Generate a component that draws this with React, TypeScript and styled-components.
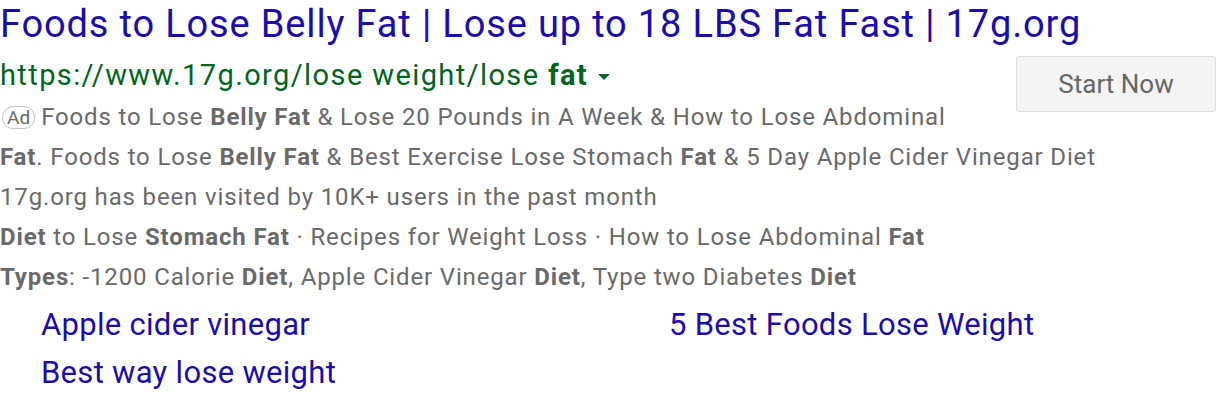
import React from "react";
import styled, { createGlobalStyle } from "styled-components";

const Global = createGlobalStyle`
  html, body { margin: 0; padding: 0; background: #fff; }
  body { font-family: Roboto, "Liberation Sans", Arial, sans-serif; }
`;

const Ad = styled.div`
  width: 1216px;
  box-sizing: border-box;
`;

const Title = styled.a`
  display: block;
  color: #1a0dab;
  font-size: 38px;
  letter-spacing: 0.85px;
  line-height: 48px;
  margin-bottom: 5px;
  text-decoration: none;
  white-space: nowrap;
`;

const Body = styled.div`
  display: block;
`;

const CtaButton = styled.button`
  float: right;
  margin: 3px 0 10px 20px;
  width: 200px;
  height: 56px;
  background: #f4f4f4;
  border: 1px solid #dcdcdc;
  border-radius: 3px;
  color: #666;
  font-family: Roboto, "Liberation Sans", Arial, sans-serif;
  font-size: 26px;
  padding: 0;
`;

const UrlLine = styled.div`
  color: #006621;
  font-size: 29px;
  letter-spacing: 1.4px;
  line-height: 44px;
  display: flex;
  align-items: center;
  white-space: pre;
  b { font-weight: 700; }
`;

const Caret = styled.span`
  display: inline-block;
  width: 0;
  height: 0;
  margin-left: 10px;
  margin-top: 3px;
  border-left: 6px solid transparent;
  border-right: 6px solid transparent;
  border-top: 6px solid #006621;
`;

const Desc = styled.div`
  color: #6a6a6a;
  font-size: 24px;
  letter-spacing: 0.85px;
  line-height: 40px;
  b { font-weight: 700; }
`;

const Badge = styled.span`
  display: inline-block;
  font-size: 19px;
  letter-spacing: 0;
  line-height: 21px;
  padding: 0 4px;
  border: 1px solid #c4c4c4;
  border-radius: 11px;
  margin: 0 6px 0 2px;
  color: #6a6a6a;
  vertical-align: 1px;
`;

const Sitelinks = styled.div`
  clear: both;
  display: grid;
  grid-template-columns: 628px 1fr;
  padding-left: 41px;
  padding-top: 4px;
`;

const Sitelink = styled.a`
  color: #1a0dab;
  font-size: 31px;
  letter-spacing: 0.3px;
  line-height: 48px;
  text-decoration: none;
`;

export default function App() {
  return (
    <>
      <Global />
      <Ad>
        <Title href="#">Foods to Lose Belly Fat | Lose up to 18 LBS Fat Fast | 17g.org</Title>
        <Body>
          <CtaButton>Start Now</CtaButton>
          <UrlLine>
            {"https://www.17g.org/lose weight/lose "}<b>fat</b>
            <Caret />
          </UrlLine>
          <Desc>
            <Badge>Ad</Badge>Foods to Lose <b>Belly Fat</b> &amp; Lose 20 Pounds in A Week &amp; How to Lose Abdominal
            <br />
            <b>Fat</b>. Foods to Lose <b>Belly Fat</b> &amp; Best Exercise Lose Stomach <b>Fat</b> &amp; 5 Day Apple Cider Vinegar Diet
          </Desc>
          <Desc>17g.org has been visited by 10K+ users in the past month</Desc>
          <Desc>
            <b>Diet</b> to Lose <b>Stomach Fat</b> · Recipes for Weight Loss · How to Lose Abdominal <b>Fat</b>
          </Desc>
          <Desc>
            <b>Types</b>: -1200 Calorie <b>Diet</b>, Apple Cider Vinegar <b>Diet</b>, Type two Diabetes <b>Diet</b>
          </Desc>
        </Body>
        <Sitelinks>
          <Sitelink href="#">Apple cider vinegar</Sitelink>
          <Sitelink href="#">5 Best Foods Lose Weight</Sitelink>
          <Sitelink href="#">Best way lose weight</Sitelink>
        </Sitelinks>
      </Ad>
    </>
  );
}
